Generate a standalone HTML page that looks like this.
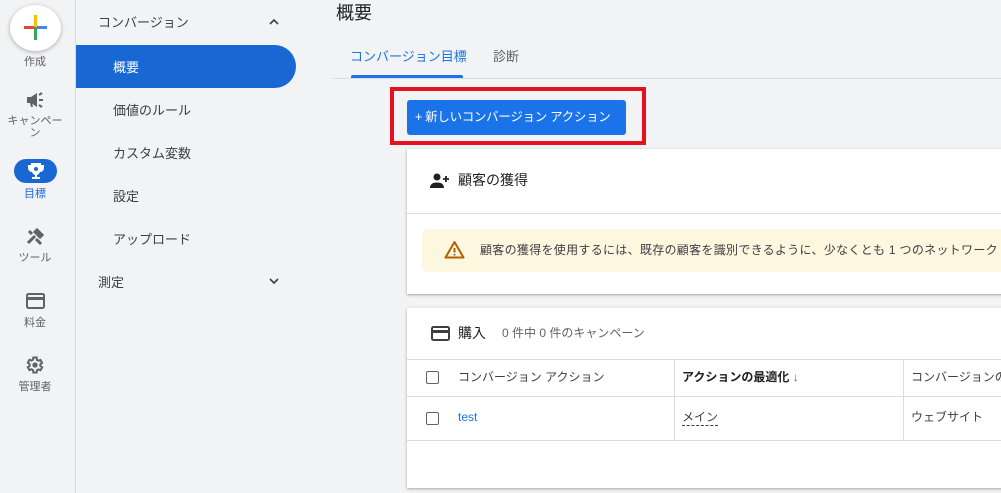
<!DOCTYPE html>
<html><head><meta charset="utf-8"><style>
*{margin:0;padding:0;box-sizing:border-box}
body{width:1001px;height:493px;overflow:hidden;background:#f1f3f4;font-family:"Liberation Sans","Noto Sans CJK JP",sans-serif;color:#3c4043;position:relative}
.a{position:absolute;white-space:nowrap}
.rl{font-size:11px;color:#5f6368;text-align:center;width:70px;left:0}
.nav{font-size:13px;color:#3c4043}
.card{position:absolute;background:#fff;box-shadow:0 1px 3px rgba(60,64,67,.3),0 1px 2px rgba(60,64,67,.15)}
.cb{position:absolute;width:13px;height:13px;border:1.5px solid #5f6368;border-radius:2px}
</style></head><body>
<div class="a" style="left:75px;top:0;width:1px;height:493px;background:#dadce0"></div>
<div class="a" style="left:10px;top:5px;width:51px;height:46px;border-radius:50%;background:#fff;box-shadow:0 1px 4px rgba(0,0,0,.3)"></div>
<div class="a" style="left:24px;top:26px;width:12px;height:3px;background:#ea4335"></div>
<div class="a" style="left:35px;top:26px;width:12px;height:3px;background:#4285f4"></div>
<div class="a" style="left:34px;top:15px;width:3px;height:12px;background:#fbbc04"></div>
<div class="a" style="left:34px;top:28px;width:3px;height:12px;background:#34a853"></div>
<div class="a rl" style="top:53px">作成</div>
<svg class="a" style="left:26px;top:92px" width="18" height="16" viewBox="0 0 18 16"><path d="M1 5h4l6-4v14l-6-4H1z" fill="#5f6368"/><path d="M4 11l1 4h2l-1-4" fill="#5f6368"/><path d="M13 3l3-2M13 8h4M13 13l3 2" stroke="#5f6368" stroke-width="2"/></svg>
<div class="a rl" style="top:115px;line-height:12px">キャンペー<br>ン</div>
<div class="a" style="left:14px;top:159px;width:43px;height:24px;border-radius:12px;background:#1967d2"></div>
<svg class="a" style="left:27px;top:162px" width="18" height="18" viewBox="0 0 18 18"><path d="M4 1h10v2h3v3a4 4 0 0 1-4 4 5 5 0 0 1-3 3v2h3v2H5v-2h3v-2a5 5 0 0 1-3-3 4 4 0 0 1-4-4V3h3z" fill="#fff"/><circle cx="9" cy="7" r="2" fill="#1967d2"/></svg>
<div class="a rl" style="top:185px;color:#1967d2">目標</div>
<svg class="a" style="left:26px;top:228px" width="18" height="18" viewBox="0 0 18 18"><path d="M2 15l7-7M3 3l3 3M11 2l5 5-2 2-5-5zM10 11l5 5" stroke="#5f6368" stroke-width="3"/></svg>
<div class="a rl" style="top:249px">ツール</div>
<svg class="a" style="left:26px;top:293px" width="19" height="16" viewBox="0 0 19 16"><rect x="1" y="1" width="17" height="14" rx="1.5" fill="none" stroke="#5f6368" stroke-width="2"/><rect x="1" y="4" width="17" height="3" fill="#5f6368"/></svg>
<div class="a rl" style="top:314px">料金</div>
<svg class="a" style="left:25px;top:355px" width="20" height="20" viewBox="0 0 24 24"><path d="M19.4 13a7.5 7.5 0 0 0 0-2l2.1-1.6-2-3.5-2.5 1a7 7 0 0 0-1.7-1L15 3h-4l-.4 2.7a7 7 0 0 0-1.7 1l-2.5-1-2 3.5L6.6 11a7.5 7.5 0 0 0 0 2l-2.2 1.6 2 3.5 2.5-1a7 7 0 0 0 1.7 1L11 21h4l.4-2.7a7 7 0 0 0 1.7-1l2.5 1 2-3.5z" fill="none" stroke="#5f6368" stroke-width="2.4" transform="translate(-1 0)"/><circle cx="12" cy="12" r="3.2" fill="#5f6368"/></svg>
<div class="a rl" style="top:378px">管理者</div>

<div class="a nav" style="left:98px;top:12px">コンバージョン</div>
<svg class="a" style="left:269px;top:18px" width="10" height="7"><path d="M1 6l4-4 4 4" stroke="#3c4043" stroke-width="1.6" fill="none"/></svg>
<div class="a" style="left:76px;top:45px;width:220px;height:43px;background:#1967d2;border-radius:0 22px 22px 0"></div>
<div class="a nav" style="left:113px;top:57px;color:#fff">概要</div>
<div class="a nav" style="left:113px;top:100px">価値のルール</div>
<div class="a nav" style="left:113px;top:143px">カスタム変数</div>
<div class="a nav" style="left:113px;top:186px">設定</div>
<div class="a nav" style="left:113px;top:229px">アップロード</div>
<div class="a nav" style="left:98px;top:272px">測定</div>
<svg class="a" style="left:269px;top:278px" width="10" height="7"><path d="M1 1l4 4 4-4" stroke="#3c4043" stroke-width="1.6" fill="none"/></svg>

<div class="a" style="left:336px;top:-1px;font-size:18px;color:#202124">概要</div>
<div class="a" style="left:350px;top:46px;font-size:13px;color:#1a73e8">コンバージョン目標</div>
<div class="a" style="left:493px;top:46px;font-size:13px;color:#5f6368">診断</div>
<div class="a" style="left:333px;top:78px;width:668px;height:1px;background:#dadce0"></div>
<div class="a" style="left:351px;top:75px;width:112px;height:3px;background:#1a73e8;border-radius:2px 2px 0 0"></div>
<div class="a" style="left:390px;top:87px;width:256px;height:58px;border:4px solid #e3121e"></div>
<div class="a" style="left:407px;top:100px;width:219px;height:35px;background:#1a73e8;border-radius:3px;color:#fff;font-size:12.5px;line-height:35px;padding-left:8px;letter-spacing:-0.3px">+ 新しいコンバージョン アクション</div>

<div class="card" style="left:407px;top:149px;width:600px;height:145px"></div>
<svg class="a" style="left:430px;top:173px" width="20" height="15" viewBox="0 0 20 15"><circle cx="7" cy="4" r="3.5" fill="#202124"/><path d="M0 15c0-4 3-5.5 7-5.5s7 1.5 7 5.5z" fill="#202124"/><path d="M16 3v6M13 6h6" stroke="#202124" stroke-width="1.8"/></svg>
<div class="a" style="left:458px;top:170px;font-size:14px;color:#202124">顧客の獲得</div>
<div class="a" style="left:407px;top:213px;width:594px;height:1px;background:#dadce0"></div>
<div class="a" style="left:422px;top:229px;width:590px;height:43px;background:#fef7e0;border-radius:6px"></div>
<svg class="a" style="left:444px;top:240px" width="21" height="19" viewBox="0 0 21 19"><path d="M10.5 2L19.5 17.5H1.5z" fill="none" stroke="#b06000" stroke-width="2" stroke-linejoin="round"/><path d="M10.5 8v4.5M10.5 14v1.5" stroke="#b06000" stroke-width="2"/></svg>
<div class="a" style="left:480px;top:241px;font-size:12px;color:#3c4043;letter-spacing:0.3px">顧客の獲得を使用するには、既存の顧客を識別できるように、少なくとも 1 つのネットワーク</div>

<div class="card" style="left:407px;top:308px;width:600px;height:180px"></div>
<svg class="a" style="left:431px;top:326px" width="19" height="15" viewBox="0 0 19 15"><rect x="1" y="1" width="17" height="13" rx="1.5" fill="none" stroke="#3c4043" stroke-width="2"/><rect x="1" y="4" width="17" height="3" fill="#3c4043"/></svg>
<div class="a" style="left:458px;top:323px;font-size:14px;color:#202124">購入</div>
<div class="a" style="left:502px;top:324px;font-size:12px;color:#5f6368">0 件中 0 件のキャンペーン</div>
<div class="a" style="left:407px;top:359px;width:594px;height:1px;background:#dadce0"></div>
<div class="a" style="left:407px;top:396px;width:594px;height:1px;background:#dadce0"></div>
<div class="a" style="left:407px;top:440px;width:594px;height:1px;background:#dadce0"></div>
<div class="a" style="left:674px;top:359px;width:1px;height:81px;background:#dadce0"></div>
<div class="a" style="left:903px;top:359px;width:1px;height:81px;background:#dadce0"></div>
<div class="cb" style="left:426px;top:371px"></div>
<div class="cb" style="left:426px;top:412px"></div>
<div class="a" style="left:458px;top:368px;font-size:12px;color:#3c4043">コンバージョン アクション</div>
<div class="a" style="left:682px;top:368px;font-size:12px;color:#202124;font-weight:bold">アクションの最適化 <span style="font-weight:normal;color:#5f6368">↓</span></div>
<div class="a" style="left:911px;top:368px;font-size:12px;color:#3c4043">コンバージョンの発生</div>
<div class="a" style="left:458px;top:410px;font-size:12px;color:#1a73e8">test</div>
<div class="a" style="left:682px;top:408px;font-size:12px;color:#3c4043;border-bottom:1px dashed #3c4043">メイン</div>
<div class="a" style="left:911px;top:408px;font-size:12px;color:#3c4043">ウェブサイト</div>
</body></html>
